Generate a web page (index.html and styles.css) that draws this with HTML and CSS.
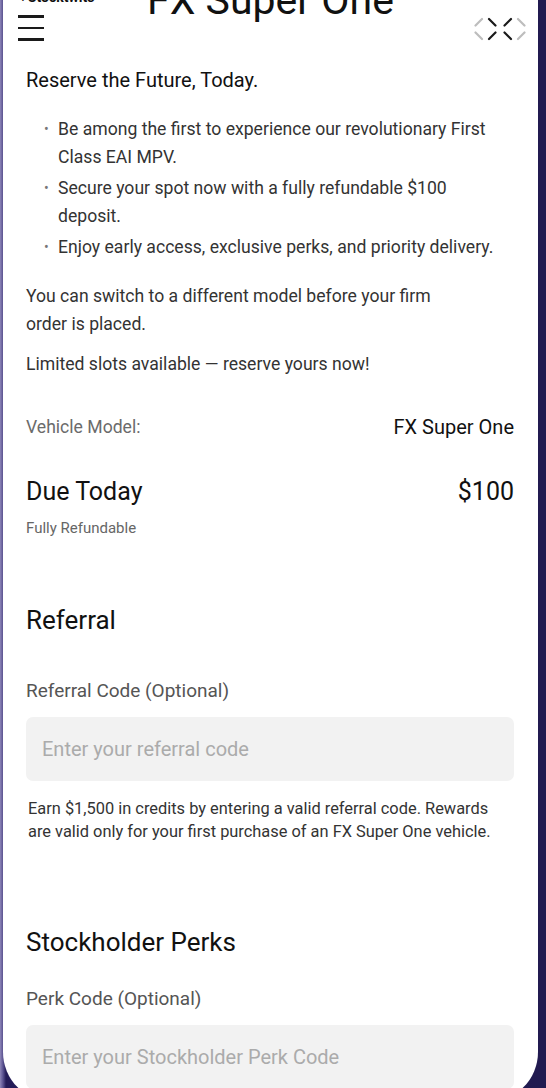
FILE: index.html
```html
<!DOCTYPE html>
<html lang="en">
<head>
    <meta charset="UTF-8">
    <meta name="viewport" content="width=device-width, initial-scale=1.0">
    <title>FX Super One</title>
    <link rel="stylesheet" href="styles.css">
</head>
<body>

    <div class="sheet">
        <div class="top-bar">
            <div class="top-left">
                <div class="back-link">&lsaquo; Stocktwits</div>
                <div class="menu-icon">
                    <span></span>
                    <span></span>
                    <span></span>
                </div>
            </div>
            <h1 class="page-title">FX Super One</h1>
            <div class="top-right">
                <svg class="expand-icon" width="52" height="26" viewBox="0 0 52 26" fill="none" stroke-width="2.2" stroke-linecap="round">
                    <path d="M8 3 L1.5 9.5 M1.5 16.5 L8 23" stroke="#bdbdbd"/>
                    <path d="M44 3 L50.5 9.5 M50.5 16.5 L44 23" stroke="#bdbdbd"/>
                    <path d="M15 3 L21.5 9.5 M37 3 L30.5 9.5 M21.5 16.5 L15 23 M30.5 16.5 L37 23" stroke="#1a1a1a"/>
                </svg>
            </div>
        </div>

        <div class="content">
            <h2 class="intro-title">Reserve the Future, Today.</h2>
            <ul class="perks-list">
                <li>Be among the first to experience our revolutionary First Class EAI MPV.</li>
                <li>Secure your spot now with a fully refundable $100 deposit.</li>
                <li>Enjoy early access, exclusive perks, and priority delivery.</li>
            </ul>
            <p class="note">You can switch to a different model before your firm<br>order is placed.</p>
            <p class="note limited">Limited slots available — reserve yours now!</p>

            <div class="row model-row">
                <span class="row-label">Vehicle Model:</span>
                <span class="row-value">FX Super One</span>
            </div>
            <div class="row due-row">
                <span>Due Today</span>
                <span>$100</span>
            </div>
            <div class="refundable">Fully Refundable</div>

            <h3 class="section-title referral-title">Referral</h3>
            <label class="field-label">Referral Code (Optional)</label>
            <input type="text" class="code-input" placeholder="Enter your referral code">
            <p class="help-text">Earn $1,500 in credits by entering a valid referral code. Rewards are valid only for your first purchase of an FX Super One vehicle.</p>

            <h3 class="section-title perks-title">Stockholder Perks</h3>
            <label class="field-label perk-label">Perk Code (Optional)</label>
            <input type="text" class="code-input perk-input" placeholder="Enter your Stockholder Perk Code">
        </div>
    </div>

</body>
</html>
```

FILE: styles.css
```css
body {
    margin: 0;
    height: 1088px;
    overflow: hidden;
    background: linear-gradient(90deg, #8d85b8 0, #5a5290 3px, #241c58 6px, #211a50 100%);
    font-family: Roboto, "Noto Sans", Arial, sans-serif;
    color: #111;
}
.sheet {
    background: white;
    margin: 0 8px 0 3px;
    height: 1102px;
    border-radius: 0 0 50px 50px;
    overflow: hidden;
}
.top-bar {
    display: grid;
    grid-template-columns: 1fr auto 1fr;
    height: 82px;
    margin-top: -14px;
}
.top-left {
    padding-left: 15px;
}
.back-link {
    font-size: 14px;
    font-weight: bold;
    line-height: 16px;
    height: 16px;
    margin: 3px 0 0 2px;
}
.menu-icon {
    display: flex;
    flex-direction: column;
    gap: 9px;
    width: 26px;
    margin-top: 10px;
}
.menu-icon span {
    display: block;
    height: 2.5px;
    background: #1a1a1a;
}
.page-title {
    margin: -8px 0 0;
    font-size: 41px;
    font-weight: normal;
    line-height: 44px;
    color: #111;
}
.top-right {
    display: flex;
    justify-content: flex-end;
    padding-right: 12px;
}
.expand-icon {
    margin-top: 30px;
}
.content {
    padding: 0 24px 0 23px;
}
.intro-title {
    margin: 0;
    font-size: 20px;
    font-weight: normal;
    line-height: 24px;
    color: #111;
}
.perks-list {
    list-style: none;
    margin: 23px 0 0;
    padding: 0 16px 0 32px;
    font-size: 17.6px;
    line-height: 28px;
    color: #333;
}
.perks-list li {
    position: relative;
    margin-bottom: 3px;
}
.perks-list li::before {
    content: "•";
    position: absolute;
    left: -14px;
    color: #777;
    font-size: 14px;
}
.note {
    margin: 21px 0 0;
    font-size: 17.6px;
    line-height: 28px;
    color: #333;
}
.limited {
    margin-top: 12px;
}
.row {
    display: flex;
    justify-content: space-between;
    align-items: center;
}
.model-row {
    margin-top: 35px;
    height: 28px;
}
.row-label {
    font-size: 17.6px;
    color: #6b6b6b;
}
.row-value {
    font-size: 20px;
    color: #111;
}
.due-row {
    margin-top: 35px;
    height: 30px;
    font-size: 25px;
    color: #111;
}
.refundable {
    margin-top: 12px;
    font-size: 15px;
    line-height: 20px;
    color: #666;
}
.section-title {
    margin: 66px 0 0;
    font-size: 26px;
    font-weight: normal;
    line-height: 32px;
    color: #111;
}
.field-label {
    display: block;
    margin-top: 43px;
    font-size: 19px;
    line-height: 24px;
    color: #555;
}
.code-input {
    display: block;
    box-sizing: border-box;
    width: 100%;
    height: 64px;
    margin-top: 14px;
    padding: 0 16px;
    border: none;
    border-radius: 7px;
    background: #f2f2f2;
    font-family: Roboto, "Noto Sans", Arial, sans-serif;
    font-size: 20px;
    color: #111;
}
.code-input::placeholder {
    color: #ababab;
}
.help-text {
    margin: 16px 0 0;
    padding-left: 2px;
    font-size: 16.4px;
    line-height: 23px;
    color: #333;
}
.perks-title {
    margin-top: 83px;
}
.perk-label {
    margin-top: 29px;
}
.perk-input {
    margin-top: 14px;
}
```
